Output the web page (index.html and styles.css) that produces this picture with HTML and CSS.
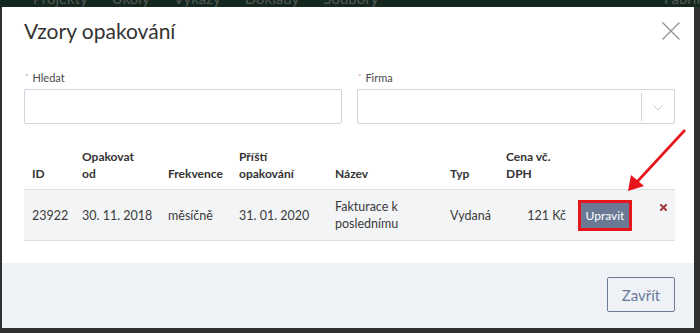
FILE: index.html
```html
<!DOCTYPE html>
<html lang="cs">
<head>
<meta charset="utf-8">
<title>Vzory opakování</title>
<link rel="stylesheet" href="styles.css">
</head>
<body>
<nav class="topnav">
  <div class="topnav-inner">
    <span class="nav-item">Projekty</span>
    <span class="nav-item">Úkoly</span>
    <span class="nav-item">Výkazy</span>
    <span class="nav-item">Doklady</span>
    <span class="nav-item">Soubory</span>
    <span class="nav-item nav-right">Fabrik</span>
  </div>
</nav>

<div class="modal">
  <div class="modal-header">
    <h2 class="modal-title">Vzory opakování</h2>
    <button class="close" type="button" aria-label="Zavřít">
      <svg width="18" height="18" viewBox="0 0 18 18"><path d="M0.5 0.5L17.5 17.5M17.5 0.5L0.5 17.5" stroke="#8e8e8e" stroke-width="1.1" fill="none"/></svg>
    </button>
  </div>

  <div class="modal-body">
    <div class="filters">
      <div class="field">
        <label class="label"><span class="req">*</span>Hledat</label>
        <div class="input"></div>
      </div>
      <div class="field">
        <label class="label"><span class="req">*</span>Firma</label>
        <div class="input select">
          <span class="select-sep"></span>
          <span class="select-arrow">
            <svg width="10" height="6" viewBox="0 0 10 6"><path d="M0.5 0.5L5 5L9.5 0.5" stroke="#c3c7cf" stroke-width="1" fill="none"/></svg>
          </span>
        </div>
      </div>
    </div>

    <table class="grid">
      <colgroup>
        <col class="c-id"><col class="c-od"><col class="c-frek"><col class="c-next"><col class="c-name"><col class="c-typ"><col class="c-cena"><col class="c-btn"><col class="c-del">
      </colgroup>
      <thead>
        <tr>
          <th>ID</th>
          <th>Opakovat<br>od</th>
          <th>Frekvence</th>
          <th>Příští opakování</th>
          <th>Název</th>
          <th>Typ</th>
          <th>Cena vč. DPH</th>
          <th></th>
          <th></th>
        </tr>
      </thead>
      <tbody>
        <tr>
          <td>23922</td>
          <td class="date">30. 11. 2018</td>
          <td>měsíčně</td>
          <td class="date">31. 01. 2020</td>
          <td>Fakturace k poslednímu</td>
          <td>Vydaná</td>
          <td class="num">121 Kč</td>
          <td class="cell-btn"><button class="btn-edit" type="button">Upravit</button></td>
          <td class="cell-del">
            <svg class="del" width="7" height="7" viewBox="0 0 7 7"><path d="M1 1L6 6M6 1L1 6" stroke="#a1383d" stroke-width="2" stroke-linecap="square" fill="none"/></svg>
          </td>
        </tr>
      </tbody>
    </table>
  </div>

  <div class="modal-footer">
    <button class="btn-close" type="button">Zavřít</button>
  </div>
</div>

<svg class="annot" width="700" height="333" viewBox="0 0 700 333">
  <line x1="685" y1="130" x2="636" y2="183" stroke="#e8141b" stroke-width="2.6"/>
  <polygon points="628,191 631,175 644,186" fill="#e8141b"/>
</svg>
</body>
</html>
```

FILE: styles.css
```css
* { box-sizing: border-box; }

html, body {
  margin: 0;
  padding: 0;
}

body {
  width: 700px;
  height: 333px;
  overflow: hidden;
  background: #303231;
  font-family: Lato, "Open Sans", "DejaVu Sans", sans-serif;
  color: #333;
  position: relative;
}

/* background nav bar, mostly covered by the modal */
.topnav {
  height: 7px;
  overflow: hidden;
  background: #15281f;
}

.topnav-inner {
  display: flex;
  gap: 24px;
  padding-left: 33px;
  margin-top: -9px;
  font-size: 15px;
  line-height: 15px;
  color: #4f5954;
  white-space: nowrap;
}

.nav-item { flex-shrink: 0; }

.nav-right {
  margin-left: auto;
  margin-right: -4px;
}

/* modal */
.modal {
  margin-left: 2px;
  width: 692px;
  background: #fff;
  display: flex;
  flex-direction: column;
}

.modal-header {
  display: flex;
  align-items: center;
  justify-content: space-between;
  padding: 12px 14px 0 22px;
}

.modal-title {
  margin: 0;
  font-size: 21px;
  line-height: 24px;
  font-weight: 400;
  color: #333;
}

.close {
  border: 0;
  background: transparent;
  padding: 0;
  width: 18px;
  height: 18px;
  display: block;
}

.close svg { display: block; }

.modal-body {
  padding: 27px 19px 22px 22px;
}

.filters {
  display: grid;
  grid-template-columns: 318px 318px;
  column-gap: 15px;
}

.field {
  display: flex;
  flex-direction: column;
  gap: 4px;
}

.label {
  font-size: 11px;
  line-height: 14px;
  color: #4a4a4a;
  padding-left: 1px;
}

.req {
  font-size: 8px;
  color: #cf9f9f;
  margin-right: 4px;
  vertical-align: 2px;
}

.input {
  height: 35px;
  border: 1px solid #cfd4df;
  border-radius: 2px;
  background: #fff;
}

.select {
  display: flex;
  align-items: center;
  justify-content: flex-end;
}

.select-sep {
  width: 1px;
  height: 28px;
  background: #cfd3da;
}

.select-arrow {
  width: 32px;
  display: flex;
  justify-content: center;
  padding-top: 2px;
}

.select-arrow svg { display: block; }

/* table */
.grid {
  margin-top: 15px;
  width: 651px;
  border-collapse: collapse;
  table-layout: fixed;
  font-size: 12px;
  line-height: 17px;
}

.c-id { width: 50px; }
.c-od { width: 86px; }
.c-frek { width: 71px; }
.c-next { width: 96px; }
.c-name { width: 115px; }
.c-typ { width: 56px; }
.c-cena { width: 76px; }
.c-btn { width: 63px; }
.c-del { width: 38px; }

.grid th {
  text-align: left;
  vertical-align: bottom;
  font-weight: 700;
  color: #333;
  padding: 9px 8px 7px;
  border-bottom: 1px solid #dce1e9;
  height: 50px;
}

.grid td {
  padding: 8px;
  vertical-align: middle;
  font-size: 12.5px;
  color: #3b3b3b;
  background: #f3f4f6;
  border-bottom: 1px solid #dce1e9;
}

.grid td.date {
  white-space: nowrap;
}

.grid td.num { text-align: right; }

.grid td.cell-btn {
  padding: 0 0 0 7px;
}

.btn-edit {
  display: block;
  width: 48px;
  height: 25px;
  margin-top: 1px;
  border: 0;
  border-radius: 0;
  background: #6a7a95;
  color: #fff;
  font-family: Lato, "Open Sans", sans-serif;
  font-size: 12px;
  line-height: 25px;
  padding: 0;
  text-align: center;
  box-shadow: 0 0 0 1px #fff;
  outline: 3px solid #e8141b;
  outline-offset: 0;
}

.grid td.cell-del {
  vertical-align: top;
  padding: 14px 8px 0 0;
}

.del {
  display: block;
  margin-left: auto;
}

/* footer */
.modal-footer {
  background: #eef2f7;
  display: flex;
  justify-content: flex-end;
  padding: 14px 19px 16px;
}

.btn-close {
  width: 68px;
  height: 35px;
  border: 1px solid #6c7c98;
  border-radius: 2px;
  background: transparent;
  color: #6b7b97;
  font-family: Lato, "Open Sans", sans-serif;
  font-size: 15px;
  padding: 0;
}

/* annotation arrow drawn on top of the screenshot */
.annot {
  position: absolute;
  left: 0;
  top: 0;
  pointer-events: none;
}
```
